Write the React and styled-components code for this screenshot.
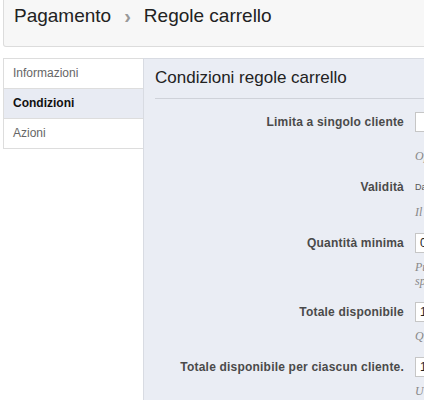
import React from 'react'
import styled, { createGlobalStyle } from 'styled-components'

const GlobalStyle = createGlobalStyle`
    html, body {
        margin: 0;
        padding: 0;
        background: #ffffff;
        overflow: hidden;
        font-family: "Liberation Sans", Arial, sans-serif;
    }
`

const Page = styled.div`
    width: 700px;
    padding-left: 3px;
`
const Header = styled.div`
    height: 46px;
    background: #f7f7f7;
    border: 1px solid #dcdcdc;
    border-top: none;
    border-radius: 0 0 0 3px;
    display: flex;
    align-items: flex-start;
    padding-left: 10px;
    font-size: 19px;
    color: #222;
    line-height: 32px;
`
const Crumb = styled.span`
    color: #222;
`
const Sep = styled.span`
    color: #999;
    font-size: 20px;
    font-weight: bold;
    margin: 0 13px 0 13px;
`
const Body = styled.div`
    display: flex;
    margin-top: 11px;
    align-items: flex-start;
`
const Sidebar = styled.div`
    width: 139px;
    border: 1px solid #dddddd;
    border-right: none;
    flex-shrink: 0;
`
const NavItem = styled.div`
    height: 29px;
    line-height: 29px;
    padding-left: 9px;
    font-size: 12px;
    color: ${p => (p.active ? '#111' : '#666')};
    font-weight: ${p => (p.active ? 'bold' : 'normal')};
    background: ${p => (p.active ? '#e8ebf3' : '#ffffff')};
    border-top: ${p => (p.first ? 'none' : '1px solid #dddddd')};
`
const Main = styled.div`
    flex: 1;
    min-height: 400px;
    background: #eaedf4;
    border-top: 1px solid #d8dbe2;
    border-left: 1px solid #d8dbe2;
    padding: 0 0 0 11px;
`
const Title = styled.h2`
    margin: 0;
    font-weight: normal;
    font-size: 17px;
    color: #222;
    line-height: 36px;
    padding-top: 1px;
    border-bottom: 1px solid #cfd2d9;
    height: 38px;
`
const Form = styled.div`
    padding-top: 13px;
`
const Row = styled.div`
    display: grid;
    grid-template-columns: 249px 1fr;
    column-gap: 11px;
    margin-bottom: 14px;
`
const Label = styled.div`
    text-align: right;
    font-size: 12px;
    font-weight: bold;
    color: #4a4a4a;
    line-height: 20px;
    letter-spacing: 0.2px;
`
const Field = styled.div`
    display: flex;
    flex-direction: column;
`
const Input = styled.div`
    width: 120px;
    height: 18px;
    border: 1px solid #c6c6c6;
    background: #fff;
    font-size: 12px;
    line-height: 18px;
    padding-left: 4px;
    color: #222;
`
const Small = styled.div`
    font-size: 9px;
    line-height: 20px;
    color: #555;
`
const Hint = styled.div`
    margin-top: ${p => p.gap}px;
    font-family: "Liberation Serif", "Times New Roman", serif;
    font-style: italic;
    font-size: 12px;
    line-height: 14px;
    color: #888;
    white-space: nowrap;
`

const rows = [
    { label: 'Limita a singolo cliente', value: '', gap: 17, hint: ['Opzionale'] },
    { label: 'Validità', small: 'Da', gap: 8, hint: ['Il periodo di validità'] },
    { label: 'Quantità minima', value: '0', gap: 7, hint: ['Puoi indicare', 'spesa minima'] },
    { label: 'Totale disponibile', value: '1', gap: 7, hint: ['Quantità totale'] },
    { label: 'Totale disponibile per ciascun cliente.', value: '1', gap: 7, hint: ['Ulteriore limite'] },
]

const App = () => {
    return (
        <Page>
            <GlobalStyle />
            <Header>
                <Crumb>Pagamento</Crumb>
                <Sep>›</Sep>
                <Crumb>Regole carrello</Crumb>
            </Header>
            <Body>
                <Sidebar>
                    <NavItem first>Informazioni</NavItem>
                    <NavItem active>Condizioni</NavItem>
                    <NavItem>Azioni</NavItem>
                </Sidebar>
                <Main>
                    <Title>Condizioni regole carrello</Title>
                    <Form>
                        {rows.map((r, i) => (
                            <Row key={i}>
                                <Label>{r.label}</Label>
                                <Field>
                                    {r.small ? <Small>{r.small}</Small> : <Input>{r.value}</Input>}
                                    <Hint gap={r.gap}>
                                        {r.hint.map((h, j) => <div key={j}>{h}</div>)}
                                    </Hint>
                                </Field>
                            </Row>
                        ))}
                    </Form>
                </Main>
            </Body>
        </Page>
    )
}

export default App
